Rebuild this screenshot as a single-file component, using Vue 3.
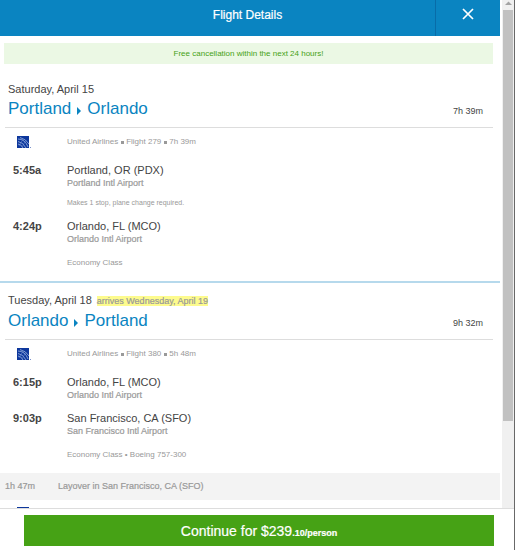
<script setup>
const trips = [
  {
    date: 'Saturday, April 15',
    from: 'Portland',
    to: 'Orlando',
    duration: '7h 39m',
    airline: ['United Airlines', 'Flight 279', '7h 39m'],
    stops: [
      { time: '5:45a', place: 'Portland, OR (PDX)', airport: 'Portland Intl Airport', note: 'Makes 1 stop, plane change required.' },
      { time: '4:24p', place: 'Orlando, FL (MCO)', airport: 'Orlando Intl Airport' },
    ],
    cabin: 'Economy Class',
  },
  {
    date: 'Tuesday, April 18',
    arrives: 'arrives Wednesday, April 19',
    from: 'Orlando',
    to: 'Portland',
    duration: '9h 32m',
    airline: ['United Airlines', 'Flight 380', '5h 48m'],
    stops: [
      { time: '6:15p', place: 'Orlando, FL (MCO)', airport: 'Orlando Intl Airport' },
      { time: '9:03p', place: 'San Francisco, CA (SFO)', airport: 'San Francisco Intl Airport' },
    ],
    cabin: 'Economy Class • Boeing 757-300',
    layover: { time: '1h 47m', text: 'Layover in San Francisco, CA (SFO)' },
  },
]
</script>

<template>
  <div class="dialog">
    <div class="viewport">
      <main class="content">
        <header class="bar">
          <h1>Flight Details</h1>
          <button class="close" type="button" aria-label="Close">
            <svg width="12" height="12" viewBox="0 0 12 12"><path d="M1 1L11 11M11 1L1 11" stroke="#fff" stroke-width="1.7" fill="none" /></svg>
          </button>
        </header>
        <p class="notice">Free cancellation within the next 24 hours!</p>

        <section v-for="trip in trips" :key="trip.date" class="trip">
          <div class="heading">
            <div>
              <p class="date">{{ trip.date }}<span v-if="trip.arrives" class="arrives">{{ trip.arrives }}</span></p>
              <h2>
                {{ trip.from }}
                <svg class="arrow" width="4" height="8" viewBox="0 0 4 8"><path d="M0 0L4 4L0 8Z" fill="#0a84c1" /></svg>
                {{ trip.to }}
              </h2>
            </div>
            <span class="duration">{{ trip.duration }}</span>
          </div>
          <div class="row airline">
            <svg class="logo" width="14" height="12" viewBox="0 0 14 12">
              <rect width="12" height="12" fill="#0d379c" />
              <path d="M1 3Q8 3 11 11M1 5.500Q6 6 9 12M3 1.500Q9 3 12 8M1 8Q4 8 6 12" stroke="#9db5e2" stroke-width=".8" fill="none" />
              <path d="M2 10L6 3M5 11L9 4" stroke="#6f8fd0" stroke-width=".5" fill="none" />
              <rect x="13" y="11" width="1" height="1" fill="#7d93cb" />
            </svg>
            <ul class="small facts">
              <li v-for="fact in trip.airline" :key="fact">{{ fact }}</li>
            </ul>
          </div>
          <div class="stops">
            <div v-for="stop in trip.stops" :key="stop.time" class="row">
              <span class="time">{{ stop.time }}</span>
              <div>
                <p class="place">{{ stop.place }}</p>
                <p class="airport">{{ stop.airport }}</p>
                <p v-if="stop.note" class="small note">{{ stop.note }}</p>
              </div>
            </div>
          </div>
          <p class="small cabin">{{ trip.cabin }}</p>
          <div v-if="trip.layover" class="layover">
            <span>{{ trip.layover.time }}</span>
            <span>{{ trip.layover.text }}</span>
          </div>
        </section>
        <div class="row next">
          <svg class="logo" width="14" height="12" viewBox="0 0 14 12"><rect width="12" height="12" fill="#0d379c" /></svg>
        </div>
      </main>
      <div class="track" aria-hidden="true">
        <svg width="7" height="10" viewBox="0 0 7 10"><path d="M0 5L3.500 1.500L7 5Z" fill="#a3a3a3" /></svg>
        <div class="thumb"></div>
      </div>
    </div>
    <footer>
      <button class="continue" type="button">Continue for $239<small>.10/person</small></button>
    </footer>
  </div>
</template>

<style>
body {
  margin: 0;
  background: #fff;
}
</style>

<style scoped>
.dialog {
  box-sizing: border-box;
  height: 100vh;
  display: flex;
  flex-direction: column;
  overflow: hidden;
  border-right: 1px solid #686868;
  font-family: "Liberation Sans", Arial, sans-serif;
  color: #444;
}
h1, h2, p, ul {
  margin: 0;
  padding: 0;
  font-weight: normal;
}
button {
  border: 0;
  padding: 0;
  font-family: inherit;
  color: #fff;
  cursor: pointer;
}
.viewport {
  flex: 1;
  min-height: 0;
  display: flex;
}
.content {
  flex: 1;
  overflow: hidden;
}
.bar {
  display: grid;
  grid-template-columns: 1fr 65px;
  height: 36px;
  background: #0a84c1;
  color: #fff;
}
.bar h1 {
  padding-left: 60px;
  font-size: 12px;
  line-height: 31px;
  text-align: center;
  -webkit-text-stroke: 0.2px #fff;
}
.close {
  background: none;
  border-left: 1px solid #086ca8;
  padding-bottom: 6px;
}
.notice {
  margin: 7px 7px 8px 4px;
  background: #ebf8e4;
  color: #46a215;
  font-size: 8px;
  line-height: 21px;
  text-align: center;
}
.trip + .trip {
  border-top: 2px solid #b6d9ec;
}
.heading {
  display: flex;
  justify-content: space-between;
  align-items: flex-end;
  margin: 0 7px 0 5px;
  padding: 9px 10px 6px 3px;
  border-bottom: 1px solid #ddd;
}
.date {
  font-size: 11px;
  line-height: 16px;
}
.arrives {
  margin-left: 5px;
  background: #fdfb8d;
  color: #999;
  font-size: 9px;
  -webkit-text-stroke: 0.2px #999;
}
h2 {
  display: flex;
  align-items: center;
  gap: 6px;
  color: #0a84c1;
  font-size: 17px;
  line-height: 24px;
}
.arrow {
  margin-top: 4px;
}
.duration {
  font-size: 9px;
  line-height: 20px;
}
.row {
  display: grid;
  grid-template-columns: 54px 1fr;
  padding-left: 13px;
}
.airline {
  padding-top: 8px;
  align-items: center;
  line-height: 14px;
}
.logo {
  margin-left: 4px;
}
.small {
  color: #999;
  font-size: 8px;
  line-height: 12px;
}
.facts {
  display: flex;
  align-items: center;
  list-style: none;
}
.facts li {
  display: flex;
  align-items: center;
}
.facts li + li::before {
  content: "";
  width: 3px;
  height: 3px;
  margin: 0 2px 0 3px;
  background: #999;
}
.stops {
  display: flex;
  flex-direction: column;
  gap: 10px;
  padding-top: 15px;
}
.time, .place {
  font-size: 11px;
  line-height: 14px;
}
.time {
  font-weight: bold;
}
.airport {
  color: #999;
  font-size: 9px;
  line-height: 12px;
  -webkit-text-stroke: 0.2px #999;
}
.note {
  margin-top: 8px;
  font-size: 7px;
}
.cabin {
  padding: 12px 0 12px 67px;
}
.layover {
  display: grid;
  grid-template-columns: 53px 1fr;
  padding-left: 5px;
  background: #f3f3f3;
  color: #999;
  font-size: 9px;
  line-height: 27px;
  -webkit-text-stroke: 0.2px #999;
}
.next {
  padding-top: 7px;
}
.track {
  width: 12px;
  padding: 0 1px;
  box-sizing: border-box;
  margin-left: 2px;
  background: #f0f0f0;
  display: flex;
  flex-direction: column;
  align-items: center;
}
.thumb {
  width: 100%;
  height: 81%;
  background: #c1c1c1;
}
footer {
  border-top: 1px solid #ddd;
  padding: 6px 20px 4px 24px;
}
.continue {
  display: block;
  width: 100%;
  height: 31px;
  background: #46a215;
  font-size: 14px;
  -webkit-text-stroke: 0.2px #fff;
}
.continue small {
  font-size: 9px;
  line-height: 1;
  font-weight: bold;
}
</style>
